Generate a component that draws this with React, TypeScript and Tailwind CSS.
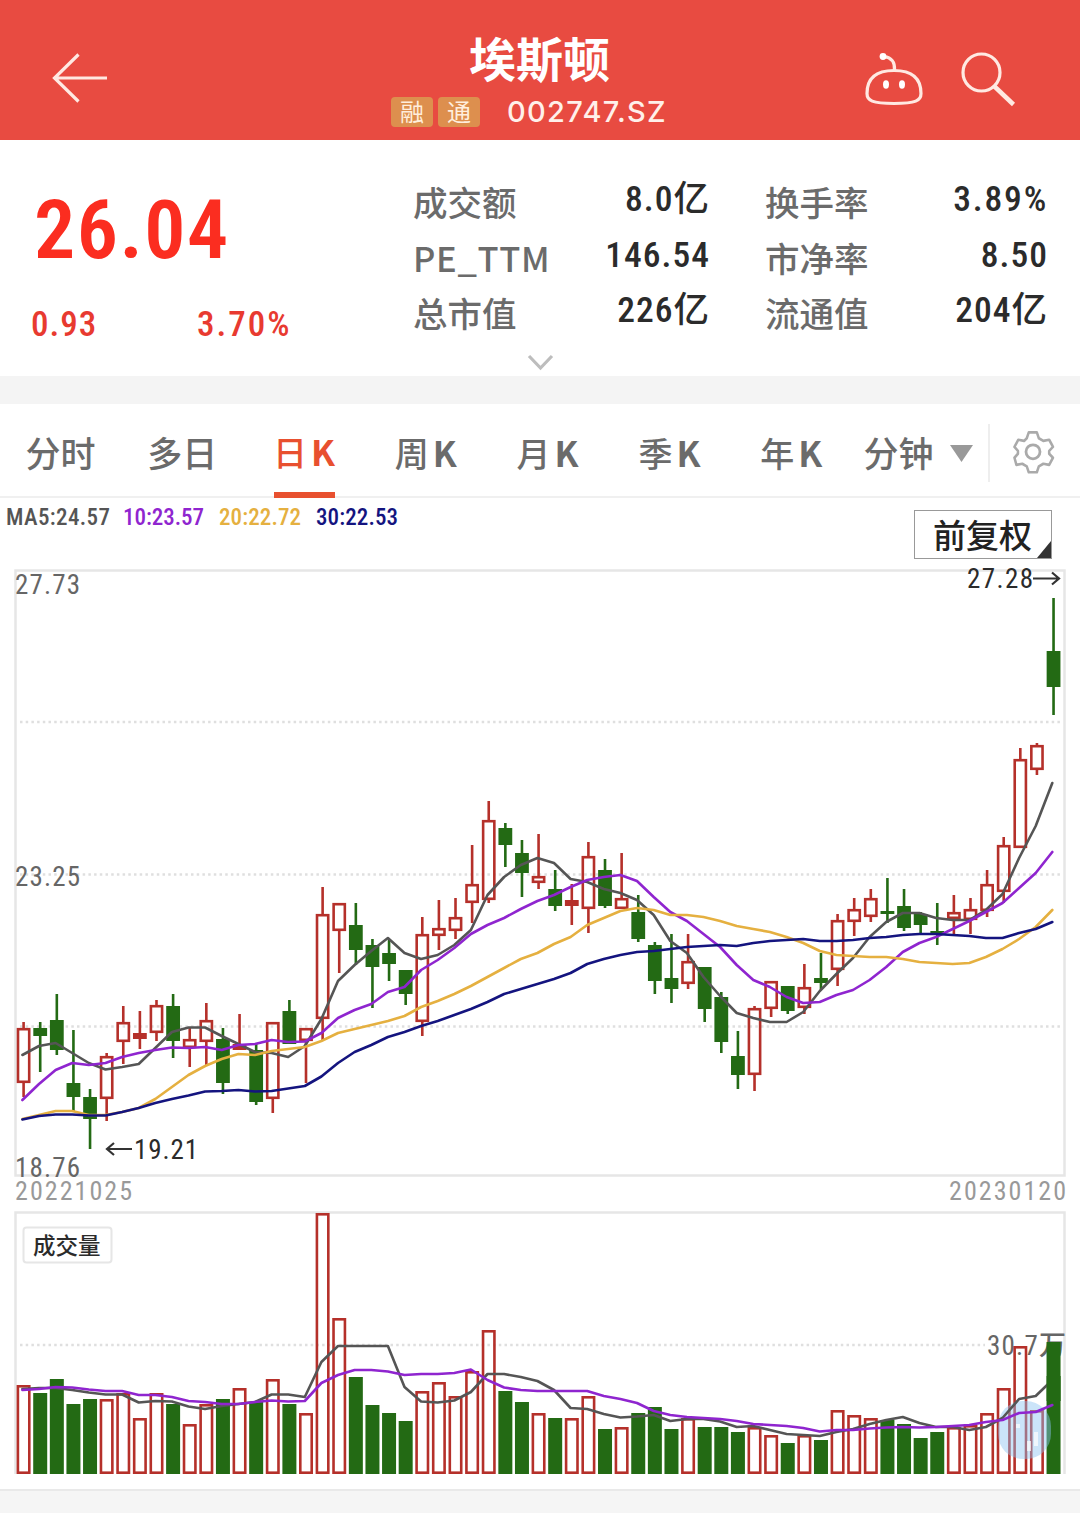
import { ReactNode } from "react";
import clsx from "clsx";

// [up, high, top, bottom, low, volumeTop]
type Bar = [number, number, number, number, number, number];

const bars: Bar[] = [
  [1, 1022, 1028, 1083, 1097, 1385],
  [0, 1022, 1028, 1036, 1072, 1393],
  [0, 994, 1020, 1050, 1055, 1379],
  [0, 1030, 1083, 1097, 1111, 1404],
  [0, 1089, 1097, 1119, 1149, 1399],
  [1, 1053, 1056, 1099, 1121, 1399],
  [1, 1006, 1022, 1042, 1064, 1393],
  [1, 1011, 1033, 1039, 1049, 1418],
  [1, 1000, 1005, 1033, 1041, 1393],
  [0, 994, 1006, 1041, 1058, 1404],
  [1, 1028, 1039, 1048, 1067, 1424],
  [1, 1003, 1020, 1042, 1065, 1404],
  [0, 1028, 1039, 1083, 1094, 1399],
  [1, 1014, 1044, 1050, 1050, 1388],
  [0, 1044, 1050, 1102, 1105, 1402],
  [1, 1022, 1022, 1099, 1113, 1379],
  [0, 1000, 1011, 1044, 1044, 1404],
  [1, 1028, 1028, 1041, 1083, 1413],
  [1, 887, 914, 1019, 1041, 1213],
  [1, 903, 903, 931, 973, 1318],
  [0, 903, 925, 950, 965, 1377],
  [0, 939, 945, 967, 1008, 1405],
  [0, 939, 953, 964, 981, 1413],
  [0, 970, 970, 994, 1005, 1421],
  [1, 917, 934, 1022, 1036, 1391],
  [1, 900, 928, 936, 950, 1382],
  [1, 898, 917, 931, 939, 1396],
  [1, 845, 884, 903, 923, 1371],
  [1, 801, 820, 900, 903, 1330],
  [0, 823, 828, 845, 867, 1391],
  [0, 840, 853, 873, 897, 1402],
  [1, 834, 876, 883, 889, 1413],
  [0, 870, 889, 906, 911, 1418],
  [1, 884, 900, 906, 925, 1418],
  [1, 842, 856, 909, 933, 1396],
  [0, 859, 870, 906, 908, 1429],
  [1, 853, 898, 909, 909, 1427],
  [0, 895, 912, 939, 942, 1413],
  [0, 942, 945, 981, 994, 1407],
  [0, 934, 978, 989, 1003, 1429],
  [1, 934, 961, 984, 989, 1418],
  [0, 967, 967, 1009, 1022, 1427],
  [0, 992, 997, 1042, 1053, 1427],
  [0, 1031, 1056, 1075, 1089, 1432],
  [1, 1006, 1008, 1075, 1091, 1427],
  [1, 981, 981, 1009, 1017, 1435],
  [0, 986, 986, 1011, 1014, 1443],
  [1, 964, 987, 1008, 1014, 1435],
  [0, 953, 978, 983, 989, 1440],
  [1, 914, 920, 970, 986, 1410],
  [1, 898, 909, 922, 936, 1415],
  [1, 889, 898, 917, 922, 1418],
  [0, 878, 911, 914, 923, 1420],
  [0, 889, 906, 928, 931, 1424],
  [0, 912, 914, 925, 934, 1438],
  [0, 903, 931, 934, 945, 1432],
  [1, 895, 912, 919, 934, 1427],
  [1, 898, 909, 920, 934, 1425],
  [1, 870, 884, 911, 917, 1413],
  [1, 837, 845, 892, 903, 1388],
  [1, 748, 759, 848, 848, 1346],
  [1, 743, 745, 770, 775, 1410],
  [0, 598, 651, 687, 715, 1342],
];

const ma5 = [
  1055, 1046, 1043, 1053, 1063, 1069.5, 1067, 1064, 1048, 1032, 1027.5, 1027.5, 1036, 1044, 1052, 1053,
  1057, 1046, 1019, 981, 965, 951, 938, 953, 959, 955, 945, 930, 895, 877, 865, 858, 863, 879, 882, 889,
  893, 900, 915, 941, 953, 977, 996, 1013, 1018, 1022, 1022, 1012, 991, 974, 958, 937, 922, 913, 913, 918,
  920, 920, 910, 894, 858, 826, 783,
];
const ma10 = [
  1100, 1084, 1070, 1063, 1065, 1063, 1057, 1053, 1050, 1047.5, 1048, 1047, 1050, 1045, 1044, 1040, 1042,
  1041.5, 1033, 1018, 1010, 1004, 992, 987, 970, 960, 948, 934, 925, 918, 909, 901, 895, 887, 880, 877,
  875, 881, 897, 912, 921, 934, 947, 965, 980, 987, 997, 1003, 1002, 995, 990, 980, 967, 952, 943, 937,
  929, 921, 912, 903, 888, 873, 852,
];
const ma20 = [
  1119, 1115, 1111, 1111, 1115, 1115, 1112, 1108, 1099, 1087, 1075, 1066, 1059, 1054, 1055, 1051, 1049,
  1047, 1041, 1033, 1029, 1025, 1021, 1016, 1007, 1001, 994, 986, 977, 968, 959, 953, 944, 937, 925, 918,
  911, 908, 910, 915, 915, 917, 921, 926, 929, 932, 937, 943, 951, 955, 956, 957, 957, 959, 962, 963, 964,
  963, 957, 949, 939, 927, 910,
];
const ma30 = [
  1119.5, 1116, 1114.5, 1114.5, 1115.5, 1115.5, 1112, 1108, 1103, 1099, 1095.5, 1091.5, 1091, 1090, 1091.5,
  1091, 1088.5, 1086, 1076.5, 1063, 1052, 1045, 1037, 1032, 1026, 1021, 1015, 1009, 1002, 994, 989, 984,
  979, 973, 964, 959, 955, 952, 951, 949, 947, 946, 945, 946, 943, 941, 940, 939, 941, 941, 940, 938, 937,
  935, 934, 934, 935, 936, 938, 938, 933, 929, 922,
];
const vol5 = [
  1389, 1388, 1388, 1390, 1392.5, 1394.5, 1394.5, 1402.5, 1401, 1401.5, 1406.5, 1409, 1406, 1404, 1402,
  1394.5, 1394.5, 1397, 1362, 1346, 1346, 1346, 1346, 1387, 1401.5, 1402.5, 1400.5, 1392, 1374, 1374, 1377,
  1381, 1390, 1408, 1409, 1414, 1417.5, 1416.5, 1415, 1421, 1419, 1419, 1421.5, 1427, 1426, 1430, 1434,
  1435, 1436, 1432, 1429, 1424, 1420, 1417, 1423, 1427, 1427, 1430, 1427, 1418, 1399, 1396, 1380,
];
const vol10 = [
  1390, 1389, 1387, 1387.5, 1389.5, 1391, 1391, 1395, 1395, 1397, 1401, 1402, 1404, 1404, 1402, 1400.5,
  1401.5, 1401, 1383, 1375, 1370, 1370, 1371.5, 1375, 1374, 1374, 1373, 1369.5, 1380, 1387.5, 1390, 1391,
  1391, 1391, 1391, 1396, 1399, 1403, 1411, 1415, 1417, 1418, 1419, 1421, 1424, 1425, 1426, 1428, 1431.5,
  1430, 1430, 1428.5, 1427.5, 1427, 1427.5, 1427, 1426, 1425, 1422, 1420, 1413, 1412, 1405,
];

const RED = "#b5302a";
const GREEN = "#236a14";

const px = (i: number) => 23.6 + i * 16.612;
const points = (ys: number[]) => ys.map((y, i) => `${(px(i) - 1.2).toFixed(1)},${y}`).join(" ");

const tabs = ["分时", "多日", "日K", "周K", "月K", "季K", "年K"];

const stats = [
  ["成交额", "8.0亿", "换手率", "3.89%"],
  ["PE_TTM", "146.54", "市净率", "8.50"],
  ["总市值", "226亿", "流通值", "204亿"],
];

function Line({ ys, color }: { ys: number[]; color: string }) {
  return <polyline points={points(ys)} fill="none" stroke={color} strokeWidth="2.6" strokeLinejoin="round" strokeLinecap="round" />;
}

function Label({ x, y, w, fill, size = 27, children }: { x: number; y: number; w: number; fill: string; size?: number; children: ReactNode }) {
  return (
    <text x={x} y={y} textLength={w} fill={fill} fontSize={size} className="[font-stretch:86%]">
      {children}
    </text>
  );
}

function Grid({ y, x2 = 1062 }: { y: number; x2?: number }) {
  return <line x1="20" x2={x2} y1={y} y2={y} stroke="#dfdfdf" strokeWidth="2.5" strokeDasharray="2.5 3.2" />;
}

function Header() {
  return (
    <header className="flex h-[140px] items-start bg-[#e84b41] text-white">
      <div className="w-[391px] pt-[50px] pl-[51px]">
        <svg width="58" height="56" viewBox="0 0 58 56" fill="none" stroke="#ffe9e2" strokeWidth="3.2">
          <path d="M27.500 4.500 3.500 28l24 23.500M3.500 28H56" />
        </svg>
      </div>
      <div className="flex w-[298px] flex-col">
        <h1 className="mt-[28px] h-[58px] pl-[78px] text-[47px] leading-[58px] font-bold">埃斯顿</h1>
        <div className="mt-[11px] flex h-[30px] items-center">
          <span className="flex h-[30px] w-[42px] items-center justify-center rounded-[4px] bg-[#dd8f4e] pb-[2px] text-[24px] text-[#ffeedd]">融</span>
          <span className="ml-[5px] flex h-[30px] w-[42px] items-center justify-center rounded-[4px] bg-[#dd8f4e] pb-[2px] text-[24px] text-[#ffeedd]">通</span>
          <span className="ml-[27px] font-[Inter] text-[29px] font-medium tracking-[1.300px] text-[#fff0ea]">002747.SZ</span>
        </div>
      </div>
      <svg className="mt-[50px] ml-[173px]" width="64" height="58" viewBox="862 50 64 58" fill="none" stroke="#ffe9e2" strokeWidth="3.2">
        <path d="M894 70.500c-18 0-27 8-27 23 0 7 5 10 27 10s27-3 27-10c0-15-9-23-27-23z" />
        <path d="M894.500 70c.5-8-3-12.500-10.500-13.500" />
        <circle cx="883" cy="56.500" r="3.4" fill="#fff" stroke="none" />
        <ellipse cx="886" cy="84.500" rx="3" ry="4.200" fill="#fff" stroke="none" />
        <ellipse cx="902" cy="84.500" rx="3" ry="4.200" fill="#fff" stroke="none" />
      </svg>
      <svg className="mt-[50px] ml-[32px]" width="62" height="58" viewBox="958 50 62 58" fill="none" stroke="#ffe9e2" strokeWidth="3.2">
        <circle cx="981.500" cy="72.500" r="18.500" />
        <path d="m994 86 19.500 18.500" strokeWidth="4.500" />
      </svg>
    </header>
  );
}

function Quote() {
  return (
    <section className="relative flex h-[236px]">
      <div className="w-[413px] text-[#fb2d20]">
        <div className="mt-[48px] ml-[34px] h-[84px] font-[Roboto] text-[82px] leading-[84px] font-[560] tracking-[1.500px] [font-stretch:80%]">26.04</div>
        <div className="mt-[33px] flex h-[40px] pl-[31px] font-[Roboto] text-[35px] leading-[40px] font-[480] tracking-[1px] text-[#e83a30] [font-stretch:85%]">
          <span className="w-[166px]">0.93</span>
          <span className="tracking-[2px]">3.70%</span>
        </div>
      </div>
      <div className="mt-[32px] flex flex-col">
        {stats.map(([a, av, b, bv]) => (
          <div key={a} className="flex h-[55.500px] items-center text-[34.500px] font-medium whitespace-nowrap text-[#6b6b6b]">
            <span className={clsx("w-[150px] pt-[5px]", a === "PE_TTM" && "tracking-[0.700px]")}>{a}</span>
            <span className="w-[147px] text-right font-[Roboto,'Noto_Sans_CJK_SC'] text-[35.500px] font-[480] tracking-[1px] text-[#2b2b2b] [font-stretch:85%]">{av}</span>
            <span className="ml-[55px] w-[130px] pt-[5px]">{b}</span>
            <span
              className={clsx(
                "w-[153px] text-right font-[Roboto,'Noto_Sans_CJK_SC'] text-[35.500px] font-[480] text-[#2b2b2b] [font-stretch:85%]",
                bv.endsWith("%") ? "tracking-[1.800px]" : "tracking-[1px]"
              )}
            >
              {bv}
            </span>
          </div>
        ))}
      </div>
      <svg className="absolute top-[213px] left-[526px]" width="28" height="20" viewBox="0 0 28 20" fill="none" stroke="#bdbdbd" strokeWidth="3.200">
        <path d="m3 3 11.500 12L26 3" />
      </svg>
    </section>
  );
}

function Tabs() {
  return (
    <nav className="flex h-[94px] border-b-2 border-[#f0f0f0] text-[35px] font-medium text-[#6b6b6b]">
      {tabs.map((t) => (
        <div key={t} className={clsx("flex w-[121.800px] flex-col items-center", t === "日K" && "text-[#e8502f]")}>
          <span className="mt-[21px] mr-[1px] flex h-[54px] items-center gap-[4px]">
            {t.endsWith("K") ? (
              <>
                <span className="text-[34px]">{t[0]}</span>
                <span className="text-[35px] font-bold">K</span>
              </>
            ) : (
              t
            )}
          </span>
          {t === "日K" && <span className="mt-[14px] h-[6px] w-[61px] shrink-0 bg-[#e8502f]" />}
        </div>
      ))}
      <div className="mt-[21px] ml-[11px] flex h-[54px] items-center">
        分钟
        <svg className="mt-[2px] ml-[16px]" width="23" height="17" viewBox="0 0 23 17">
          <path d="M0 0h23L11.500 17z" fill="#999" />
        </svg>
      </div>
      <div className="mt-[20px] ml-[15px] h-[58px] w-[2px] bg-[#eee]" />
      <svg className="mt-[25px] ml-[22px]" width="44" height="46" viewBox="0 0 44 46" fill="none" stroke="#aaa" strokeWidth="2.800" strokeLinejoin="round">
        <path d="M17.500 2.500h9l2.200 6.200 5 2.800 6.500-1.200 3 5.200 1.200 2.300-4.200 4.200v3l4.200 4.200-4.200 7.500-6.500-1.200-5 2.800-2.200 6.200h-9l-2.200-6.200-5-2.800-6.500 1.200L1.600 29.200 5.500 25v-3l-3.900-4.200 4.200-7.500 6.500 1.200 3-2.800z" transform="translate(1 1) scale(.9 .95)" />
        <circle cx="21" cy="22.800" r="7" />
      </svg>
    </nav>
  );
}

function Legend() {
  return (
    <div className="flex h-[62px] justify-between">
      <svg width="420" height="40" viewBox="0 498 420 40" className="font-[Roboto] font-[480]">
        <Label x={6} y={524.5} w={104} fill="#555" size={23}>MA5:24.57</Label>
        <Label x={123} y={524.5} w={81} fill="#8f25cf" size={23}>10:23.57</Label>
        <Label x={219} y={524.5} w={82} fill="#e5b040" size={23}>20:22.72</Label>
        <Label x={316} y={524.5} w={82} fill="#14147f" size={23}>30:22.53</Label>
      </svg>
      <div className="relative mt-[12px] mr-[28px] flex h-[49px] w-[138px] items-center border border-[#999] pl-[18px] text-[33px] font-medium text-[#222]">
        前复权
        <svg className="absolute right-0 bottom-0" width="14" height="17" viewBox="0 0 14 17">
          <path d="M14 0v17H0z" fill="#333" />
        </svg>
      </div>
    </div>
  );
}

function PriceChart() {
  return (
    <svg className="block font-[Roboto] font-[450]" width="1080" height="646" viewBox="0 560 1080 646">
      <rect x="15.500" y="570.500" width="1049" height="605" fill="none" stroke="#e6e6e6" strokeWidth="2.500" />
      <Grid y={722} />
      <Grid y={874.5} />
      <Grid y={1026.5} />
      {bars.map(([up, high, top, bottom, low], i) => (
        <g key={i} fill={up ? RED : GREEN}>
          {high < top && <rect x={px(i) - 1.3} y={high} width="2.600" height={top - high} />}
          {low > bottom && <rect x={px(i) - 1.3} y={bottom} width="2.600" height={low - bottom} />}
          {up && bottom - top > 6 ? (
            <rect x={px(i) - 5.6} y={top + 1.2} width="11.200" height={bottom - top - 2.4} fill="none" stroke={RED} strokeWidth="2.600" />
          ) : (
            <rect x={px(i) - 6.9} y={top} width="13.800" height={bottom - top} />
          )}
        </g>
      ))}
      <Line ys={ma5} color="#555" />
      <Line ys={ma10} color="#8f25cf" />
      <Line ys={ma20} color="#e5b040" />
      <Line ys={ma30} color="#14147f" />
      <Label x={15} y={594} w={65} fill="#666">27.73</Label>
      <Label x={15} y={885.5} w={65} fill="#666">23.25</Label>
      <Label x={15} y={1177} w={65} fill="#666">18.76</Label>
      <Label x={15} y={1199.5} w={117} fill="#999" size={26}>20221025</Label>
      <Label x={949} y={1199.5} w={117} fill="#999" size={26}>20230120</Label>
      <Label x={134} y={1159} w={64} fill="#2b2b2b">19.21</Label>
      <Label x={967} y={588} w={66} fill="#2b2b2b">27.28</Label>
      <path d="M132 1149h-25m7-6-7 6 7 6M1033 578.500h26m-7-6 7 6-7 6" fill="none" stroke="#333" strokeWidth="2.200" />
    </svg>
  );
}

function VolumeChart() {
  return (
    <svg className="block" width="1080" height="283" viewBox="0 1206 1080 283">
      <path d="M15.500 1474V1212.500H1064.500V1474" fill="none" stroke="#e6e6e6" strokeWidth="2.500" />
      <Grid y={1345} x2={985} />
      <g className="font-[Roboto,'Noto_Sans_CJK_SC'] font-[450]">
        <Label x={987} y={1354.5} w={79} fill="#666">30.7万</Label>
      </g>
      {bars.map(([up, , , , , top], i) =>
        up ? (
          <rect key={i} x={px(i) - 5.7} y={top + 1.3} width="11.400" height={1474 - top - 2.6} fill="none" stroke={RED} strokeWidth="2.600" />
        ) : (
          <rect key={i} x={px(i) - 7} y={top} width="14" height={1474 - top} fill={GREEN} />
        )
      )}
      <rect x="998" y="1401" width="53" height="58" rx="25" fill="#8cc4f2" opacity="0.450" />
      <path d="M1036 1432v14M1029 1441v10M1018 1424v4" stroke="#fff" strokeWidth="4" opacity="0.700" />
      <Line ys={vol5} color="#555" />
      <Line ys={vol10} color="#8f25cf" />
      {/* the latest bar stays above the MA5 line */}
      <rect x="1046.600" y="1376" width="14" height="25" fill={GREEN} />
      <rect x="23.500" y="1227.500" width="88" height="35" rx="3" fill="#fff" stroke="#e6e6e6" strokeWidth="2" />
      <text x="33" y="1254" fontSize="22.500" fontWeight="500" fill="#2b2b2b">成交量</text>
    </svg>
  );
}

export default function App() {
  return (
    <div className="flex h-[1513px] w-[1080px] flex-col overflow-hidden bg-white font-['Noto_Sans_CJK_SC',sans-serif]">
      <Header />
      <Quote />
      <div className="h-[28px] shrink-0 bg-[#f4f4f4]" />
      <Tabs />
      <Legend />
      <PriceChart />
      <VolumeChart />
      <div className="flex-1 border-t-2 border-[#e9e9e9] bg-[#f5f5f5]" />
    </div>
  );
}
